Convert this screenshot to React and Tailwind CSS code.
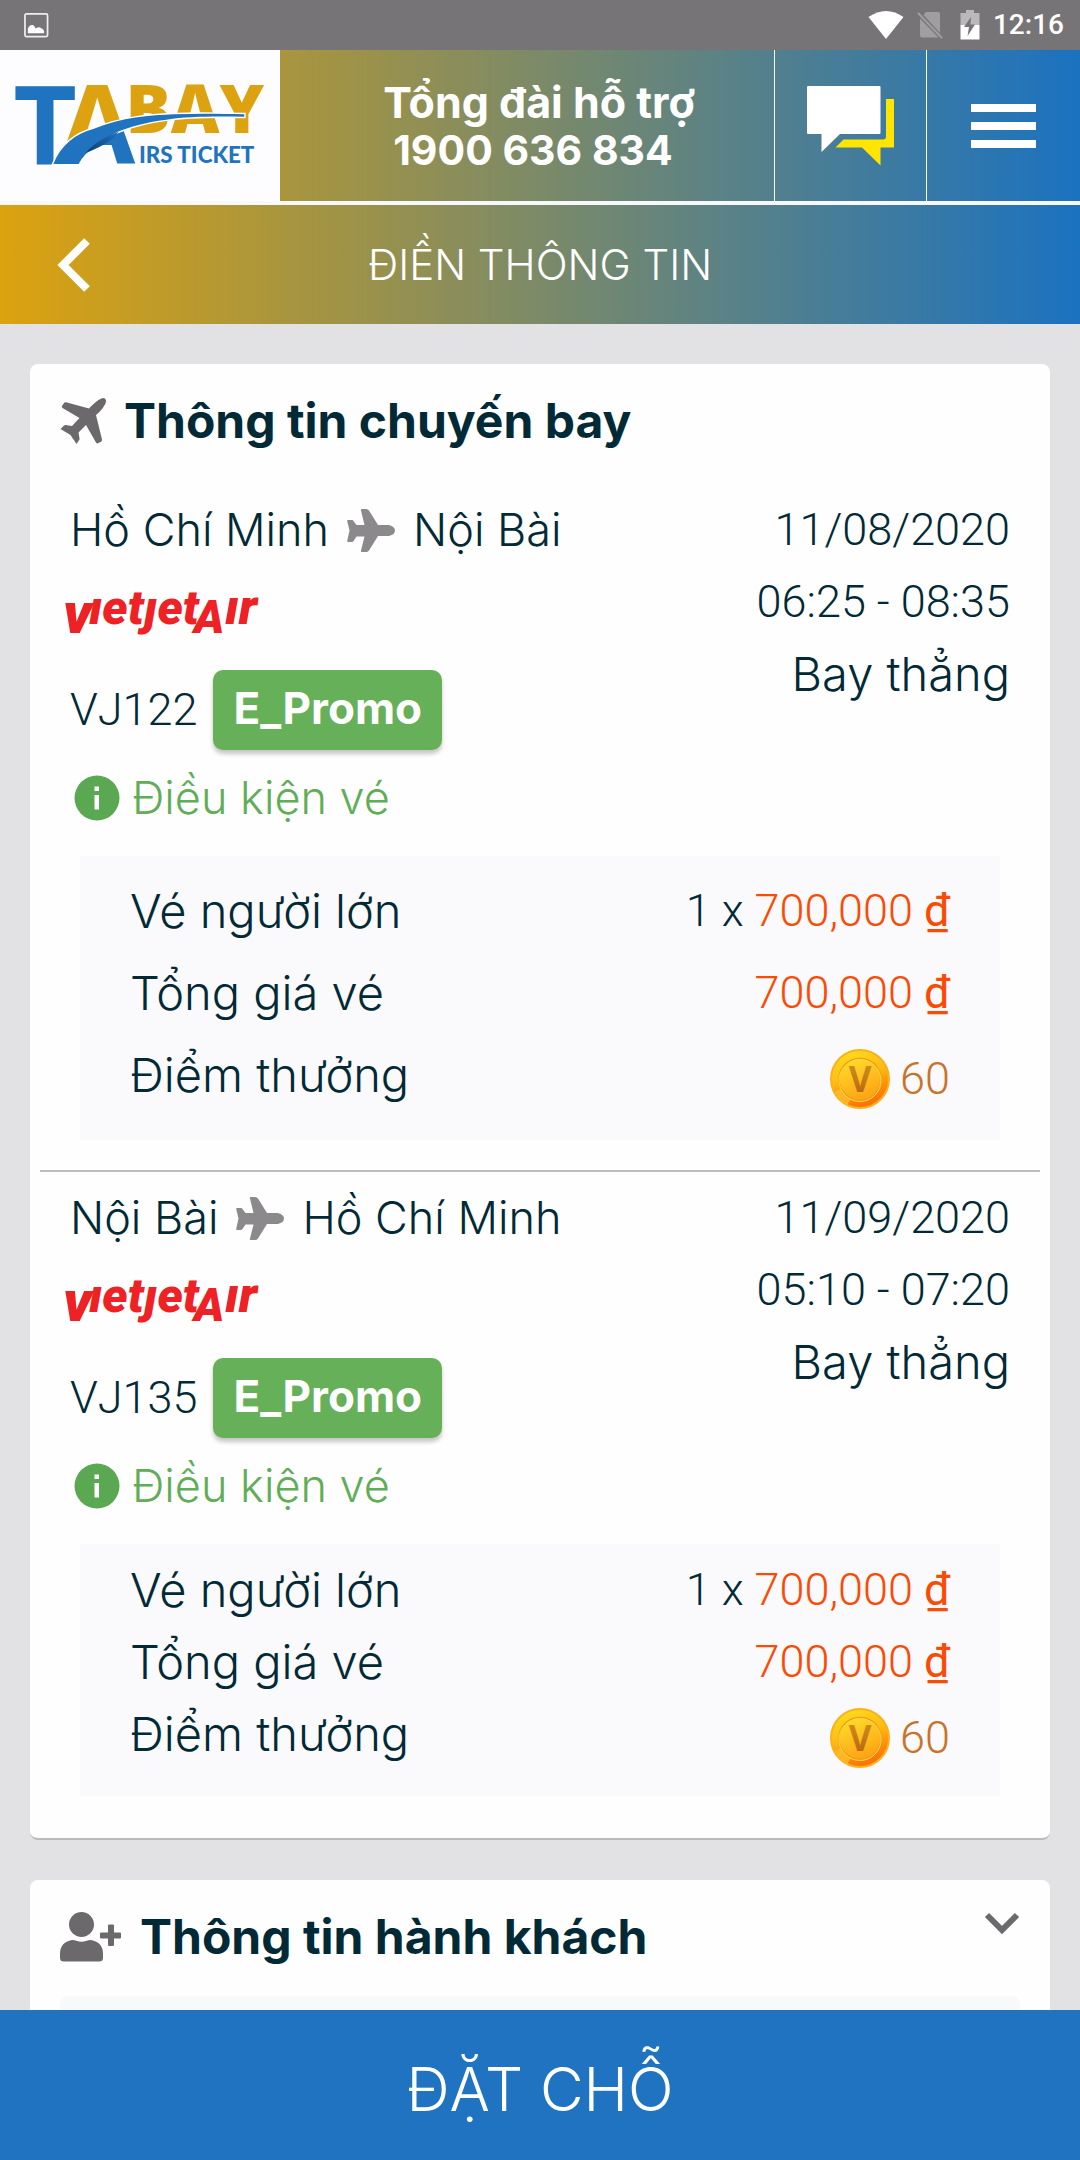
const SANS = "font-['Inter','Noto_Sans',sans-serif]";
const NUM = "font-['Roboto','Noto_Sans',sans-serif]";

function Logo() {
  const swoosh =
    "M51 167C59 147 74 136 92 131C122 119 150 117 175 116C200 115 225 115.500 247 116L247 118.500C215 118 190 118 167 121.500C145 124 130 129 117 134C98 144 84 154 77 167Z";
  return (
    <svg viewBox="0 50 280 155" className="h-full w-full" role="img" aria-label="TABAY AIRS TICKET">
      <defs>
        <linearGradient id="split" gradientUnits="userSpaceOnUse" x1="75" y1="100" x2="105" y2="171">
          <stop offset="0.500" stopColor="#dca20f" />
          <stop offset="0.500" stopColor="#2073be" />
        </linearGradient>
        <linearGradient id="fold" x1="0" y1="1" x2="1" y2="0">
          <stop offset="0" stopColor="#0c3c68" />
          <stop offset="1" stopColor="#2073be" />
        </linearGradient>
      </defs>
      <g fontFamily="Open Sans, sans-serif" fontWeight="700">
        <text x="57" y="167" fontSize="113" fill="url(#split)">A</text>
        <text x="125" y="135" fontSize="69" fontWeight="800" fill="#dca20f">BAY</text>
        <text x="10" y="167" fontSize="113" fill="#2073be">T</text>
      </g>
      <path d={swoosh} fill="#2073be" stroke="#ffffff" strokeWidth="3" paintOrder="stroke" />
      <path d="M84 156C92 146 104 139 118 134C114 141 104 148 84 156Z" fill="url(#fold)" />
      <text x="139" y="166" fontSize="23" fill="#2073be" fontFamily="Lato, sans-serif" fontWeight="900">IRS TICKET</text>
    </svg>
  );
}

function VietjetLogo() {
  return (
    <svg viewBox="65 588 194 52" className="h-[52px] w-[194px] overflow-visible" role="img" aria-label="Vietjet Air">
      <g fontFamily="Roboto, sans-serif" fontWeight="900" fontStyle="italic" fill="#ee2124">
        <text x="62" y="631" fontSize="58">v</text>
        <text x="88" y="622" fontSize="48">ıetȷet</text>
        <text x="193" y="631" fontSize="46">A</text>
        <text x="224" y="622" fontSize="50">ır</text>
      </g>
    </svg>
  );
}

const PLANE =
  "M14.500 0H19Q21 0 22 1.500L31 16H42Q48 17.500 48 21.500Q48 25.500 42 27H31L22 41.500Q21 43 19 43H15Q13.500 43 14 41.500L17.500 27.500H9.500L6.500 32Q6 33 5 33H1Q0 33 0.200 32L2.500 21.500L0.200 12Q0 11 1 11H5Q6 11 6.500 12L9.500 16H17.500L14 1.500Q13.500 0 14.500 0Z";

function PlaneRight() {
  return (
    <svg viewBox="0 0 48 43" className="h-[43px] w-12 shrink-0 fill-[#8b898c]" aria-hidden="true">
      <path d={PLANE} />
    </svg>
  );
}

function PlaneUp() {
  return (
    <svg viewBox="0 0 46 46" className="size-[46px] shrink-0 overflow-visible fill-[#6b696c]" aria-hidden="true">
      <path d="M45 0.500Q47.500 3 44 8Q42 12 36 17L42 41.500Q42.300 43 41 43.800L38 45.300Q36.800 45.800 36 44.500L26 27L18.500 34.500L19.500 40.500Q19.600 41.500 19 42.300L16.500 46L10.500 37L0.500 31L4 27.500Q4.700 27 5.700 27L12 28L19.500 20L2.500 10Q1.300 9.200 2 8L4 5Q4.700 4 6 4.300L29 10.500Q34.500 4.500 38.500 2Q43 -0.800 45 0.500Z" />
    </svg>
  );
}

function UserPlus() {
  return (
    <svg viewBox="0 0 62 50" className="h-[50px] w-[62px] shrink-0 fill-[#6b696c]" aria-hidden="true">
      <circle cx="21.500" cy="12.500" r="12.500" />
      <path d="M12 28Q15 28 17 29Q21.500 30.500 26 29Q28 28 31 28Q43 30 43 42V46Q43 49.500 39 49.500H4Q0 49.500 0 46V42Q0 30 12 28Z" />
      <path d="M49 12.500H53Q54 12.500 54 13.500V20.500H60Q61 20.500 61 21.500V25.500Q61 26.500 60 26.500H54V33Q54 34 53 34H49Q48 34 48 33V26.500H41Q40 26.500 40 25.500V21.500Q40 20.500 41 20.500H48V13.500Q48 12.500 49 12.500Z" />
    </svg>
  );
}

function Coin() {
  return (
    <svg viewBox="0 0 60 60" className="size-[60px] shrink-0" aria-hidden="true">
      <defs>
        <linearGradient id="rim" x1="0.300" y1="0" x2="0.650" y2="1">
          <stop offset="0" stopColor="#ffdc1c" />
          <stop offset="0.450" stopColor="#fdbb12" />
          <stop offset="0.750" stopColor="#fb8b0a" />
          <stop offset="1" stopColor="#fb6a08" />
        </linearGradient>
        <linearGradient id="face" x1="0.300" y1="0" x2="0.700" y2="1">
          <stop offset="0" stopColor="#ffdb2a" />
          <stop offset="1" stopColor="#fda013" />
        </linearGradient>
        <linearGradient id="vee" x1="0" y1="0" x2="0" y2="1">
          <stop offset="0" stopColor="#d09a22" />
          <stop offset="1" stopColor="#b85d08" />
        </linearGradient>
      </defs>
      <circle cx="30" cy="30" r="29" fill="url(#rim)" stroke="#fbb21a" strokeWidth="2" />
      <path d="M5 43L14 38A21 21 0 0 0 22 49L17 56A29 29 0 0 1 5 43Z" fill="#ffc531" opacity="0.700" />
      <circle cx="30" cy="30.500" r="21" fill="url(#face)" stroke="#f39a10" strokeWidth="1.500" />
      <circle cx="30" cy="31.500" r="21" fill="none" stroke="#ffd94a" strokeWidth="1" />
      <text x="30" y="43" textAnchor="middle" fontSize="35" fontWeight="700" fontFamily="Open Sans, sans-serif" fill="url(#vee)">V</text>
    </svg>
  );
}

function StatusBar() {
  return (
    <div className="flex h-[50px] shrink-0 items-center justify-between bg-[#777477] px-4">
      <svg viewBox="0 0 26 26" className="ml-2 size-[25px]" aria-hidden="true">
        <rect x="1" y="1" width="23.500" height="23.500" rx="1.500" fill="none" stroke="#eeeeee" strokeWidth="1.800" />
        <path d="M4 21V16Q6 12 9 12.500Q11 13 12 16Q16 13.500 18 16Q21 16 21 21Z" fill="#fff" />
      </svg>
      <div className="flex items-center gap-[13px]">
        <svg viewBox="0 0 36 28" className="h-7 w-9" aria-hidden="true">
          <path d="M0.500 6Q18 -6 35.500 6L18 28Z" fill="#fff" />
        </svg>
        <svg viewBox="0 0 26 28" className="h-7 w-[26px]" aria-hidden="true">
          <path d="M9 1H21Q23 1 23 3V22L6.500 4ZM3 7.500L21.500 26.500H5Q3 26.500 3 24.500Z" fill="#a09ea1" />
          <path d="M1 2L25 27" stroke="#a09ea1" strokeWidth="2" />
        </svg>
        <svg viewBox="0 0 20 30" className="ml-1 h-[30px] w-5" aria-hidden="true">
          <path d="M6 0H14V3H19.500V15H0.500V3H6Z" fill="#bab8ba" />
          <path d="M0.500 15H19.500V29.500H0.500Z" fill="#fff" />
          <path d="M11 7L4 17H9L7.500 26L15 14.500H10.500Z" fill="#777477" />
        </svg>
        <span className={`${NUM} text-[28px] leading-none font-medium text-white`}>12:16</span>
      </div>
    </div>
  );
}

function Header() {
  return (
    <header className="shrink-0 bg-linear-to-r/srgb from-[#dca20f] to-[#1b72c0] text-white">
      <div className="flex h-[155px] border-b-4 border-[#f6f8fb]">
        <a href="#home" className="w-[280px] shrink-0 bg-[#fdfcfe]">
          <Logo />
        </a>
        <a
          href="tel:1900636834"
          className="flex flex-1 flex-col items-center justify-center pl-6 text-center leading-[48px] font-bold"
        >
          <span className="text-[43px]">Tổng đài hỗ trợ</span>
          <span className="pr-3 text-[41px]">1900 636 834</span>
        </a>
        <button type="button" aria-label="Chat" className="flex w-[152px] items-center justify-center border-l border-white">
          <svg viewBox="0 0 88 80" className="h-20 w-[88px]" aria-hidden="true">
            <path d="M1 0H72.500Q73.500 0 73.500 1V47Q73.500 48 72.500 48H33L14.500 66V48H1Q0 48 0 47V1Q0 0 1 0Z" fill="#fff" />
            <path d="M79 13H87V61.500H73.500V79.500L55 61.500H28.500L36.500 53.500H76Q79 53.500 79 50.500Z" fill="#ffe500" />
          </svg>
        </button>
        <button type="button" aria-label="Menu" className="flex w-[154px] flex-col items-center justify-center gap-[10px] border-l border-white">
          <span className="h-2 w-[65px] bg-white" />
          <span className="h-2 w-[65px] bg-white" />
          <span className="h-2 w-[65px] bg-white" />
        </button>
      </div>
      <div className="flex h-[119px] items-center px-[56px]">
        <button type="button" aria-label="Back" className="w-9">
          <svg viewBox="0 0 36 56" className="h-14 w-9" aria-hidden="true">
            <path d="M31 4L7 28L31 52" fill="none" stroke="#fff" strokeWidth="8" />
          </svg>
        </button>
        <h1 className="flex-1 pr-9 text-center text-[42px] leading-[60px] font-light">ĐIỀN THÔNG TIN</h1>
      </div>
    </header>
  );
}

function Price({ children }) {
  return (
    <span className="text-[#fa4b05]">
      {children} <span className="font-normal">₫</span>
    </span>
  );
}

function Leg({ from, to, date, time, code, boxClass, rowClass }) {
  return (
    <section className="text-[45px] leading-[72px] font-light text-[#012a36]">
      <div className="flex justify-between px-10">
        <div>
          <div className="flex items-center gap-[18px] whitespace-nowrap">
            <span>{from}</span>
            <PlaneRight />
            <span>{to}</span>
          </div>
          <div className="mt-6 -ml-1">
            <VietjetLogo />
          </div>
          <div className="mt-7 flex items-center gap-4">
            <span className={NUM}>{code}</span>
            <span className="flex h-20 items-center rounded-[10px] bg-[#65b058] px-5 pb-1 text-[44px] leading-none font-bold text-white shadow-[0_4px_4px_rgba(0,0,0,0.22)]">
              E_Promo
            </span>
          </div>
          <button type="button" className="mt-3 flex h-[72px] items-center gap-3 pl-1 text-[#5fae57]">
            <svg viewBox="0 0 46 46" className="size-[46px]" aria-hidden="true">
              <circle cx="23" cy="23" r="22.500" fill="#5aa851" />
              <path d="M20.500 11.500H25V16H20.500ZM20.500 20H25V34.500H20.500Z" fill="#fff" />
            </svg>
            Điều kiện vé
          </button>
        </div>
        <div className="text-right whitespace-nowrap">
          <div className={NUM}>{date}</div>
          <div className={NUM}>{time}</div>
          <div className="text-[47px]">Bay thẳng</div>
        </div>
      </div>
      <dl className={`mx-[50px] mt-[22px] bg-[#faf9fb] px-[50px] ${boxClass}`}>
        <div className={`flex items-center justify-between ${rowClass}`}>
          <dt className="text-[47px]">Vé người lớn</dt>
          <dd className={NUM}>
            1 x <Price>700,000</Price>
          </dd>
        </div>
        <div className={`flex items-center justify-between ${rowClass}`}>
          <dt className="text-[47px]">Tổng giá vé</dt>
          <dd className={NUM}>
            <Price>700,000</Price>
          </dd>
        </div>
        <div className={`flex items-center justify-between ${rowClass}`}>
          <dt className="text-[47px]">Điểm thưởng</dt>
          <dd className={`${NUM} flex items-center gap-[10px] pt-2 text-[#c9732a]`}>
            <Coin />
            60
          </dd>
        </div>
      </dl>
    </section>
  );
}

export default function App() {
  return (
    <div className={`${SANS} flex h-screen flex-col bg-[#e2e1e3]`}>
      <StatusBar />
      <Header />
      <main className="flex min-h-0 flex-1 flex-col gap-10 overflow-y-auto px-[30px] pt-10 [scrollbar-width:none]">
        <article className="shrink-0 rounded-lg border-b-2 border-[#bab9bb] bg-[#fefefe] pb-[42px]">
          <h2 className="flex h-[114px] items-center gap-[18px] px-[30px] text-[48px] font-bold whitespace-nowrap text-[#012a36]">
            <PlaneUp />
            Thông tin chuyến bay
          </h2>
          <div className="pt-4">
            <Leg from="Hồ Chí Minh" to="Nội Bài" date="11/08/2020" time="06:25 - 08:35" code="VJ122" boxClass="pt-[14px] pb-6" rowClass="h-[82px]" />
          </div>
          <hr className="mx-[10px] mt-[30px] border-t-2 border-[#bcbbbd]" />
          <div className="pt-[10px]">
            <Leg from="Nội Bài" to="Hồ Chí Minh" date="11/09/2020" time="05:10 - 07:20" code="VJ135" boxClass="pt-[10px] pb-[26px]" rowClass="h-[72px]" />
          </div>
        </article>
        <article className="shrink-0 rounded-t-lg bg-[#fefefe] px-[30px]">
          <div className="flex h-[114px] items-center gap-[18px]">
            <UserPlus />
            <h2 className="flex-1 text-[48px] font-bold whitespace-nowrap text-[#012a36]">Thông tin hành khách</h2>
            <button type="button" aria-label="Collapse" className="mt-7 self-start">
              <svg viewBox="0 0 36 30" className="h-[30px] w-9" aria-hidden="true">
                <path d="M3 7L18 22L33 7" fill="none" stroke="#6b696c" strokeWidth="6" />
              </svg>
            </button>
          </div>
          <div className="mt-0.5 h-20 rounded-t-lg bg-[#f8f9f9]" />
        </article>
      </main>
      <button type="button" className="h-[150px] shrink-0 bg-[#2073c1] pt-2 text-[60px] leading-[80px] font-light text-white">
        ĐẶT CHỖ
      </button>
    </div>
  );
}
